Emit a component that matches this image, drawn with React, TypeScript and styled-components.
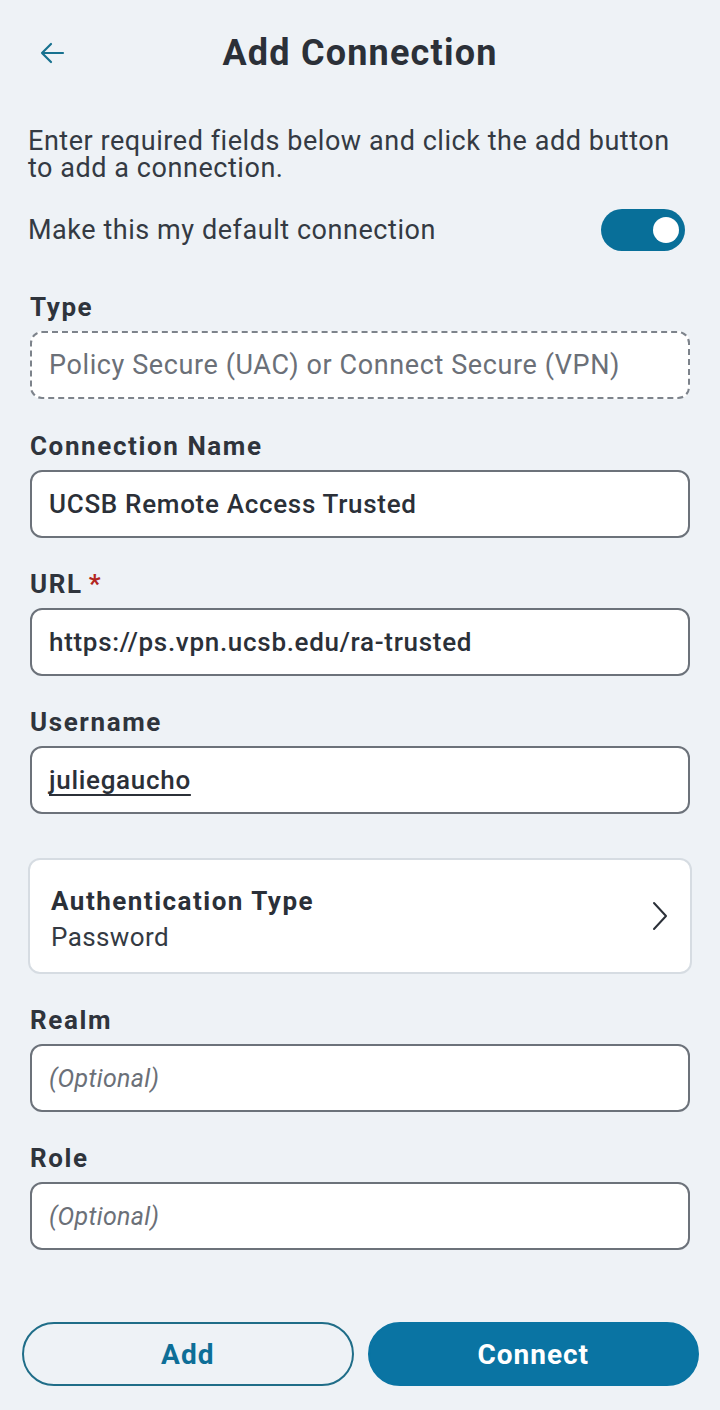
import React from 'react';
import styled, { createGlobalStyle } from 'styled-components';

const GlobalStyle = createGlobalStyle`
  html, body {
    margin: 0;
    padding: 0;
    background: #eef2f6;
  }
  body {
    font-family: Roboto, "Liberation Sans", sans-serif;
    color: #2f343c;
  }
`;

const Page = styled.div`
  width: 720px;
  min-height: 1410px;
  box-sizing: border-box;
  background: #eef2f6;
  display: flex;
  flex-direction: column;
`;

const Header = styled.header`
  height: 106px;
  display: flex;
  align-items: center;
  position: relative;
  justify-content: center;
`;

const BackButton = styled.button`
  position: absolute;
  left: 34px;
  top: 35px;
  width: 36px;
  height: 36px;
  padding: 0;
  border: none;
  background: transparent;
  display: flex;
  align-items: center;
  justify-content: center;
`;

const Title = styled.h1`
  margin: 0;
  font-size: 36px;
  font-weight: 700;
  color: #2b3038;
  letter-spacing: 1.2px;
`;

const Body = styled.main`
  padding: 22px 30px 0 30px;
  display: flex;
  flex-direction: column;
`;

const Intro = styled.p`
  margin: 0 0 0 -2px;
  font-size: 27px;
  line-height: 27px;
  letter-spacing: 0.55px;
  color: #343a43;
`;

const ToggleRow = styled.div`
  margin-top: 27px;
  display: flex;
  align-items: center;
  justify-content: space-between;
  padding-right: 5px;
  margin-left: -2px;
`;

const ToggleText = styled.span`
  font-size: 27px;
  letter-spacing: 0.55px;
  color: #343a43;
`;

const Switch = styled.div<{ on: boolean }>`
  width: 84px;
  height: 42px;
  border-radius: 21px;
  background: ${p => (p.on ? '#086f99' : '#b9c1c9')};
  display: flex;
  align-items: center;
  justify-content: ${p => (p.on ? 'flex-end' : 'flex-start')};
  padding: 0 6px;
  box-sizing: border-box;
`;

const Knob = styled.span`
  width: 26px;
  height: 26px;
  border-radius: 50%;
  background: #ffffff;
`;

const Field = styled.div<{ top: number }>`
  margin-top: ${p => p.top}px;
  display: flex;
  flex-direction: column;
`;

const Label = styled.label`
  font-size: 26px;
  font-weight: 700;
  letter-spacing: 1.6px;
  color: #2f343c;
  line-height: 28px;
  margin-bottom: 10px;
`;

const Required = styled.span`
  color: #b3261e;
  margin-left: 6px;
`;

const InputBox = styled.div<{ dashed?: boolean }>`
  height: 68px;
  box-sizing: border-box;
  background: #ffffff;
  border: 2px ${p => (p.dashed ? 'dashed #7d838b' : 'solid #6c727a')};
  border-radius: 12px;
  display: flex;
  align-items: center;
  padding: 0 17px;
`;

const Value = styled.span<{ underline?: boolean }>`
  font-size: 26px;
  font-weight: 500;
  letter-spacing: 0.7px;
  color: #2b3038;
  text-decoration: ${p => (p.underline ? 'underline' : 'none')};
  text-decoration-skip-ink: none;
  text-underline-offset: 5px;
  text-decoration-thickness: 1.5px;
`;

const Placeholder = styled.span<{ italic?: boolean }>`
  font-size: ${p => (p.italic ? 25 : 27)}px;
  letter-spacing: ${p => (p.italic ? 0.3 : 0.6)}px;
  color: #6b7078;
  font-style: ${p => (p.italic ? 'italic' : 'normal')};
`;

const AuthCard = styled.div`
  margin: 44px -2px 0 -2px;
  height: 116px;
  box-sizing: border-box;
  background: #ffffff;
  border: 2px solid #d6dce2;
  border-radius: 12px;
  display: flex;
  align-items: center;
  justify-content: space-between;
  padding: 6px 21px 0 21px;
`;

const AuthText = styled.div`
  display: flex;
  flex-direction: column;
  gap: 6px;
`;

const AuthTitle = styled.span`
  font-size: 26px;
  line-height: 30px;
  font-weight: 700;
  letter-spacing: 1.5px;
  color: #2b3038;
`;

const AuthValue = styled.span`
  font-size: 26px;
  line-height: 30px;
  letter-spacing: 0.4px;
  color: #343a43;
`;

const Chevron = styled.svg`
  margin-top: -6px;
`;

const Footer = styled.footer`
  margin-top: auto;
  padding: 0 21px 24px 22px;
  display: grid;
  grid-template-columns: 1fr 1fr;
  gap: 14px;
`;

const Button = styled.button<{ primary?: boolean }>`
  height: 64px;
  border-radius: 32px;
  font-family: Roboto, "Liberation Sans", sans-serif;
  font-size: 28px;
  font-weight: 700;
  letter-spacing: 1px;
  border: 2px solid ${p => (p.primary ? '#0a74a3' : '#1f6d88')};
  background: ${p => (p.primary ? '#0a74a3' : 'transparent')};
  color: ${p => (p.primary ? '#ffffff' : '#0d6e97')};
`;

const App: React.FC = () => {
  return (
    <Page>
      <GlobalStyle />
      <Header>
        <BackButton aria-label="Back">
          <svg width="26" height="24" viewBox="0 0 26 24" fill="none">
            <path d="M24 12H3M12 3L3 12l9 9" stroke="#17718f" strokeWidth="2.2" strokeLinecap="round" strokeLinejoin="round" />
          </svg>
        </BackButton>
        <Title>Add Connection</Title>
      </Header>
      <Body>
        <Intro>Enter required fields below and click the add button to add a connection.</Intro>
        <ToggleRow>
          <ToggleText>Make this my default connection</ToggleText>
          <Switch on>
            <Knob />
          </Switch>
        </ToggleRow>

        <Field top={42}>
          <Label>Type</Label>
          <InputBox dashed>
            <Placeholder>Policy Secure (UAC) or Connect Secure (VPN)</Placeholder>
          </InputBox>
        </Field>

        <Field top={33}>
          <Label>Connection Name</Label>
          <InputBox>
            <Value>UCSB Remote Access Trusted</Value>
          </InputBox>
        </Field>

        <Field top={32}>
          <Label>URL<Required>*</Required></Label>
          <InputBox>
            <Value>https://ps.vpn.ucsb.edu/ra-trusted</Value>
          </InputBox>
        </Field>

        <Field top={32}>
          <Label>Username</Label>
          <InputBox>
            <Value underline>juliegaucho</Value>
          </InputBox>
        </Field>

        <AuthCard>
          <AuthText>
            <AuthTitle>Authentication Type</AuthTitle>
            <AuthValue>Password</AuthValue>
          </AuthText>
          <Chevron width="18" height="30" viewBox="0 0 18 30" fill="none">
            <path d="M3 2l12 13L3 28" stroke="#2b3038" strokeWidth="2" strokeLinecap="round" strokeLinejoin="round" />
          </Chevron>
        </AuthCard>

        <Field top={32}>
          <Label>Realm</Label>
          <InputBox>
            <Placeholder italic>(Optional)</Placeholder>
          </InputBox>
        </Field>

        <Field top={32}>
          <Label>Role</Label>
          <InputBox>
            <Placeholder italic>(Optional)</Placeholder>
          </InputBox>
        </Field>
      </Body>
      <Footer>
        <Button>Add</Button>
        <Button primary>Connect</Button>
      </Footer>
    </Page>
  );
};

export default App;
